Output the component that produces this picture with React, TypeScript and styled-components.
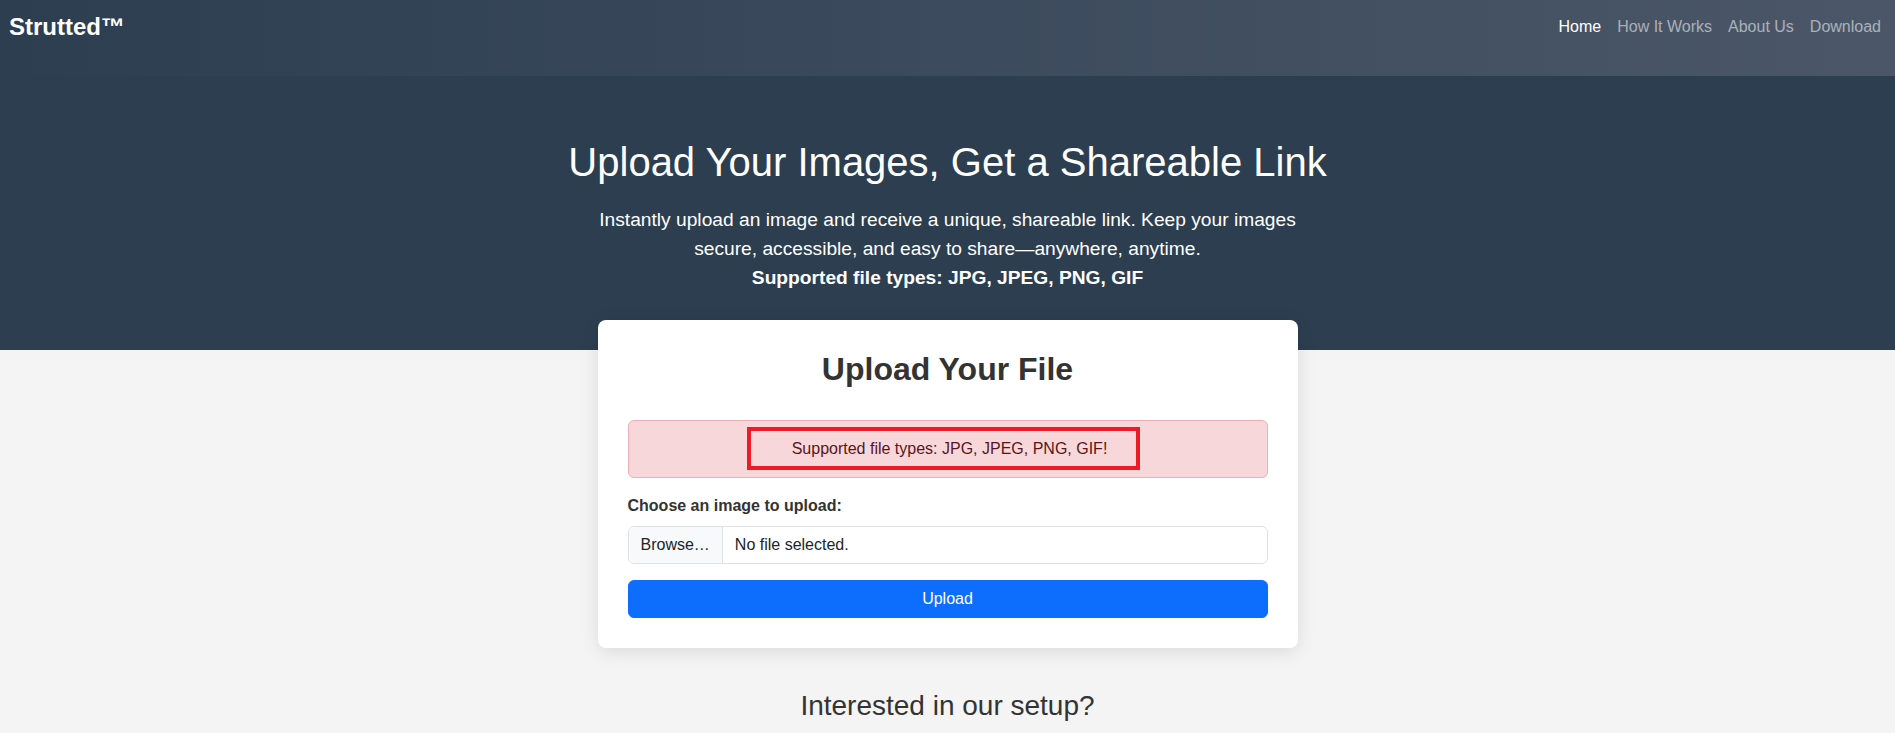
import React from "react";
import styled, { createGlobalStyle } from "styled-components";

const GlobalStyle = createGlobalStyle`
  * { box-sizing: border-box; }
  body {
    margin: 0;
    background: #f4f4f4;
    font-family: "Liberation Sans", Arial, sans-serif;
    color: #212529;
    font-size: 16px;
    line-height: 1.5;
  }
`;

const Header = styled.header`
  height: 76px;
  padding: 9px 6px 0 9px;
  display: flex;
  align-items: flex-start;
  background: linear-gradient(90deg, #2c3e50 0%, #4b5769 100%);
`;

const NavRow = styled.div`
  display: flex;
  align-items: center;
  justify-content: space-between;
  width: 100%;
  height: 36px;
`;

const Brand = styled.a`
  font-size: 24px;
  font-weight: 700;
  line-height: 36px;
  color: #fff;
  text-decoration: none;
`;

const NavList = styled.nav`
  display: flex;
  align-items: center;
`;

const NavLink = styled.a<{ $active?: boolean }>`
  padding: 0 8px;
  font-size: 16px;
  line-height: 24px;
  color: ${({ $active }) => ($active ? "#fff" : "rgba(255, 255, 255, 0.55)")};
  text-decoration: none;
`;

const Hero = styled.section`
  background: #2c3e50;
  color: #fff;
  text-align: center;
  padding: 62px 20px 58px;
`;

const HeroTitle = styled.h1`
  margin: 0 0 20px;
  font-size: 40px;
  font-weight: 300;
  line-height: 1.2;
`;

const HeroText = styled.p`
  max-width: 700px;
  margin: 0 auto;
  font-size: 19.2px;
  line-height: 28.8px;
`;

const Main = styled.main`
  display: flex;
  flex-direction: column;
  align-items: center;
  padding: 0 20px;
`;

const Card = styled.div`
  width: 700px;
  margin-top: -30px;
  padding: 30px;
  background: #fff;
  border-radius: 8px;
  box-shadow: 0 4px 18px rgba(0, 0, 0, 0.1);
`;

const CardTitle = styled.h2`
  margin: 0 0 31px;
  text-align: center;
  font-size: 32px;
  font-weight: 700;
  line-height: 1.2;
  color: #333;
`;

const Alert = styled.div`
  margin-bottom: 16px;
  padding: 16px;
  text-align: center;
  color: #58151c;
  background: #f8d7da;
  border: 1px solid #f1aeb5;
  border-radius: 6px;
`;

const Marked = styled.span`
  margin-right: 8px;
  padding: 9px 29px 9px 41px;
  border: 4px solid #ed1c24;
`;

const Label = styled.label`
  display: block;
  margin-bottom: 8px;
  font-weight: 700;
  color: #333;
`;

const FileField = styled.div`
  display: flex;
  height: 38px;
  margin-bottom: 16px;
  border: 1px solid #dee2e6;
  border-radius: 6px;
  overflow: hidden;
`;

const BrowseButton = styled.span`
  display: flex;
  align-items: center;
  padding: 0 12px;
  background: #f8f9fa;
  border-right: 1px solid #dee2e6;
  color: #212529;
`;

const FileName = styled.span`
  display: flex;
  align-items: center;
  padding: 0 12px;
  color: #212529;
`;

const UploadButton = styled.button`
  display: block;
  width: 100%;
  height: 38px;
  padding: 0;
  border: 1px solid #0d6efd;
  border-radius: 6px;
  background: #0d6efd;
  color: #fff;
  font-family: inherit;
  font-size: 16px;
`;

const SetupTitle = styled.h3`
  margin: 41px 0 0;
  font-size: 28px;
  font-weight: 400;
  line-height: 1.2;
  color: #333;
  text-align: center;
`;

export default function App() {
  return (
    <>
      <GlobalStyle />
      <Header>
        <NavRow>
          <Brand href="#">Strutted™</Brand>
          <NavList>
            <NavLink href="#" $active>
              Home
            </NavLink>
            <NavLink href="#">How It Works</NavLink>
            <NavLink href="#">About Us</NavLink>
            <NavLink href="#">Download</NavLink>
          </NavList>
        </NavRow>
      </Header>
      <Hero>
        <HeroTitle>Upload Your Images, Get a Shareable Link</HeroTitle>
        <HeroText>
          Instantly upload an image and receive a unique, shareable link. Keep your images
          secure, accessible, and easy to share—anywhere, anytime.
          <br />
          <strong>Supported file types: JPG, JPEG, PNG, GIF</strong>
        </HeroText>
      </Hero>
      <Main>
        <Card>
          <CardTitle>Upload Your File</CardTitle>
          <Alert>
            <Marked>Supported file types: JPG, JPEG, PNG, GIF!</Marked>
          </Alert>
          <Label htmlFor="file">Choose an image to upload:</Label>
          <FileField id="file">
            <BrowseButton>Browse…</BrowseButton>
            <FileName>No file selected.</FileName>
          </FileField>
          <UploadButton type="button">Upload</UploadButton>
        </Card>
        <SetupTitle>Interested in our setup?</SetupTitle>
      </Main>
    </>
  );
}
